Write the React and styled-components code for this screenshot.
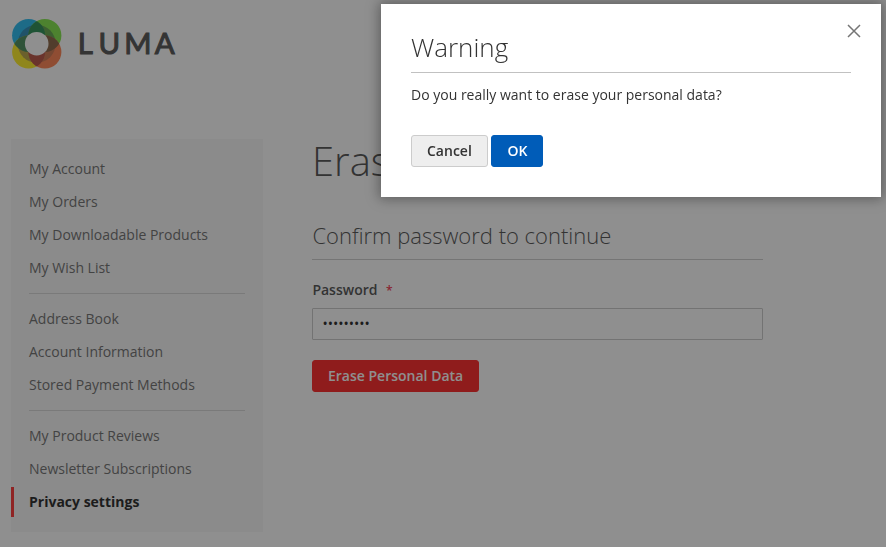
import React, { useState } from "react";
import styled, { createGlobalStyle } from "styled-components";

const GlobalStyle = createGlobalStyle`
  *, *::before, *::after { box-sizing: border-box; }
  html, body { margin: 0; height: 100%; overflow: hidden; background: #fff; }
  body {
    color: #333;
    font: 400 14px/20px "Open Sans", "Noto Sans", sans-serif;
  }
`;

const Page = styled.div`
  height: 547px;
  padding: 0 11px;
  overflow: hidden;
`;

const Header = styled.header`
  height: 139px;
  padding-top: 16px;
`;

const LogoMark = styled.svg`
  display: block;
  width: 170px;
  height: 56px;
`;

const LogoText = styled.text`
  font: 400 29.4px Lato, sans-serif;
  fill: #363636;
  stroke: #363636;
  stroke-width: 1.1px;
`;

const Columns = styled.div`
  display: grid;
  grid-template-columns: 252px 451px;
  column-gap: 49px;
  align-items: start;
`;

const Sidebar = styled.nav`
  height: 393px;
  padding: 15px 0;
  background: #f5f5f5;
`;

const NavList = styled.ul`
  display: flex;
  flex-direction: column;
  gap: 3px;
  margin: 0;
  padding: 0;
  list-style: none;

  & + &::before {
    content: "";
    height: 1px;
    margin: 10px 18px 7px;
    background: #d1d1d1;
  }
`;

const NavItem = styled.li`
  height: 30px;
  padding: 5px 18px 5px 15px;
  border-left: 3px solid ${(p) => (p.$current ? "#ff1212" : "transparent")};
  color: ${(p) => (p.$current ? "#000" : "#575757")};
  font-weight: ${(p) => (p.$current ? 700 : 400)};
  white-space: nowrap;
`;

const Title = styled.h1`
  margin: 0;
  height: 80px;
  font-size: 40px;
  font-weight: 300;
  line-height: 44px;
  white-space: nowrap;
`;

const Legend = styled.h2`
  height: 41px;
  margin: 0 0 20px;
  padding: 3px 0 0 0.4px;
  border-bottom: 1px solid #c5c5c5;
  font-size: 22px;
  font-weight: 300;
  line-height: 27px;
`;

const Label = styled.label`
  display: flex;
  gap: 8.5px;
  height: 20px;
  margin-bottom: 8px;
  padding-left: 0.4px;
  font-weight: 600;
`;

const Required = styled.span`
  padding-top: 1px;
  color: #f0102f;
  font-size: 12px;
  font-weight: 600;
`;

const PasswordInput = styled.input`
  display: block;
  width: 100%;
  height: 32px;
  margin: 0 0 20px;
  padding: 0 9.4px 2px;
  border: 1px solid #c2c2c2;
  border-radius: 1px;
  outline: none;
  background: #fff;
  color: #000;
  font: 400 14px/20px "Open Sans", sans-serif;
`;

const tones = {
  danger: ["#ff0000", "#ff0000", "#fff"],
  primary: ["#005cb8", "#005cb8", "#fff"],
  plain: ["#eee", "#ccc", "#333"],
};

const Button = styled.button`
  height: 32px;
  padding: 0 15px;
  border: 1px solid ${(p) => tones[p.$tone][1]};
  border-radius: 3px;
  background: ${(p) => tones[p.$tone][0]};
  color: ${(p) => tones[p.$tone][2]};
  font: 600 14px/16px "Open Sans", sans-serif;
  white-space: nowrap;
`;

const Overlay = styled.div`
  position: fixed;
  inset: 0;
  background: rgba(51, 51, 51, 0.55);
`;

const Dialog = styled.section`
  position: absolute;
  top: 4px;
  right: 5px;
  width: 500px;
  height: 193px;
  padding: 28px 30px 30px;
  background: #fff;
  box-shadow: 0 0 12px 2px rgba(0, 0, 0, 0.35);
`;

const DialogTitle = styled.h2`
  height: 41px;
  margin: 0 0 12px;
  border-bottom: 1px solid #c1c1c1;
  font-size: 26px;
  font-weight: 300;
  line-height: 31px;
`;

const Message = styled.p`
  height: 20px;
  margin: 0 0 30px;
`;

const Actions = styled.footer`
  display: flex;
  gap: 3.6px;
`;

const CloseButton = styled.button`
  position: absolute;
  top: 20px;
  right: 20px;
  width: 14px;
  height: 14px;
  padding: 0;
  border: 0;
  background: none;
`;

const CloseIcon = styled.svg`
  display: block;
  width: 14px;
  height: 14px;
  stroke: #757575;
  stroke-width: 1.5;
`;

const groups = [
  ["My Account", "My Orders", "My Downloadable Products", "My Wish List"],
  ["Address Book", "Account Information", "Stored Payment Methods"],
  ["My Product Reviews", "Newsletter Subscriptions", "Privacy settings"],
];

const petals = [
  { id: "blue", x: 17.6, y: 19.4, fill: "#03b0ee", ring: "#0a78aa" },
  { id: "green", x: 33.9, y: 19.4, fill: "#6ee22c", ring: "#479430" },
  { id: "yellow", x: 17.6, y: 36, fill: "#ffeb00", ring: "#b09727" },
  { id: "orange", x: 33.9, y: 36, fill: "#ff6e34", ring: "#c45f32" },
];

const overlaps = [
  ["blue", "green", "#077b38"],
  ["blue", "yellow", "#2c7a40"],
  ["green", "orange", "#774a25"],
  ["yellow", "orange", "#ae3525"],
];

function Logo() {
  return (
    <LogoMark viewBox="0 0 170 56" role="img" aria-label="Luma">
      <defs>
        {petals.map((p) => (
          <clipPath id={p.id} key={p.id}>
            <circle cx={p.x} cy={p.y} r="16.5" />
          </clipPath>
        ))}
      </defs>
      {petals.map((p) => (
        <circle key={p.id} cx={p.x} cy={p.y} r="16.5" fill={p.fill} />
      ))}
      {petals.map((p) => (
        <g key={p.id} clipPath={`url(#${p.id})`}>
          <circle cx="25.7" cy="27.7" r="19" fill={p.ring} />
        </g>
      ))}
      {overlaps.map(([a, b, fill]) => (
        <g key={a + b} clipPath={`url(#${a})`}>
          <g clipPath={`url(#${b})`}>
            <rect width="56" height="56" fill={fill} />
          </g>
        </g>
      ))}
      <circle cx="25.7" cy="27.7" r="11.8" fill="#fff" />
      <LogoText x="66.8 87.6 113.3 143.8" y="37.6">LUMA</LogoText>
    </LogoMark>
  );
}

export default function App() {
  const [password, setPassword] = useState("password1");
  return (
    <>
      <GlobalStyle />
      <Page>
        <Header>
          <Logo />
        </Header>
        <Columns>
          <Sidebar>
            {groups.map((items) => (
              <NavList key={items[0]}>
                {items.map((item) => (
                  <NavItem key={item} $current={item === "Privacy settings"}>
                    {item}
                  </NavItem>
                ))}
              </NavList>
            ))}
          </Sidebar>
          <main>
            <Title>Erase Personal Data</Title>
            <Legend>Confirm password to continue</Legend>
            <Label htmlFor="password">
              Password <Required>*</Required>
            </Label>
            <PasswordInput
              id="password"
              type="password"
              value={password}
              onChange={(e) => setPassword(e.target.value)}
            />
            <Button $tone="danger">Erase Personal Data</Button>
          </main>
        </Columns>
      </Page>
      <Overlay>
        <Dialog role="dialog" aria-label="Warning">
          <DialogTitle>Warning</DialogTitle>
          <Message>Do you really want to erase your personal data?</Message>
          <Actions>
            <Button $tone="plain">Cancel</Button>
            <Button $tone="primary">OK</Button>
          </Actions>
          <CloseButton aria-label="Close">
            <CloseIcon viewBox="0 0 14 14">
              <path d="M1 1 13 13M13 1 1 13" />
            </CloseIcon>
          </CloseButton>
        </Dialog>
      </Overlay>
    </>
  );
}
